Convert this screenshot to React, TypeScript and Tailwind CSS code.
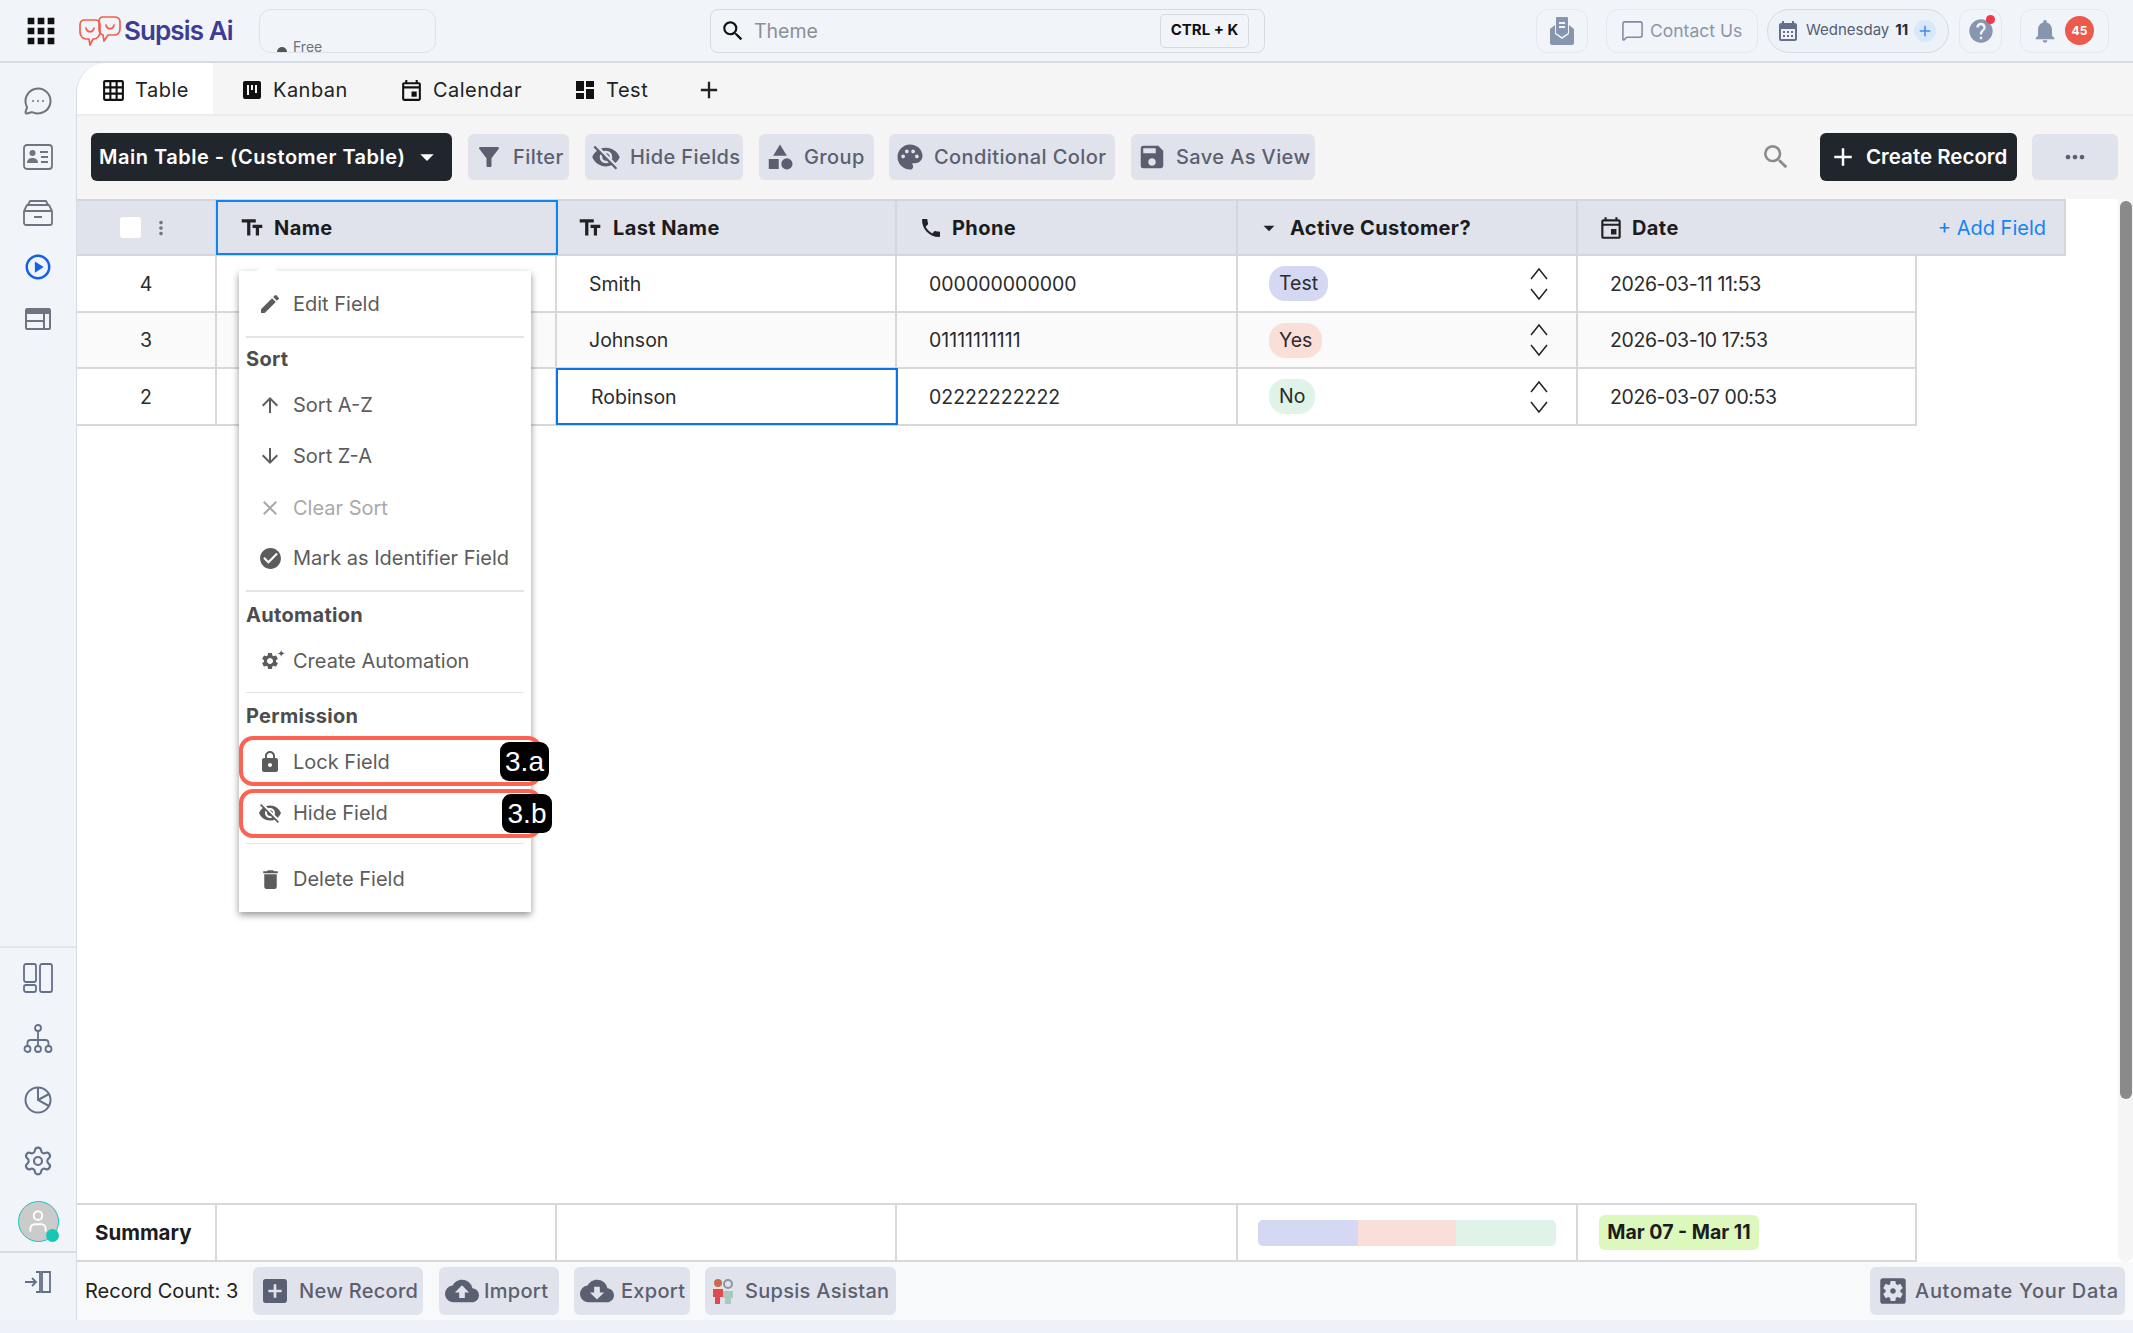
import type { ReactNode } from 'react';
import { MessageCircleMore, MessageSquare, Settings, User } from 'lucide-react';
import {
  MdAddBox, MdApps, MdArrowDownward, MdArrowDropDown, MdArrowUpward, MdCalendarMonth, MdCategory, MdCheckCircle,
  MdClose, MdCloudDownload, MdCloudUpload, MdDashboard, MdDelete, MdEdit, MdFilterAlt, MdGridOn, MdHelp, MdLocalPhone,
  MdLock, MdMoreHoriz, MdMoreVert, MdNotifications, MdOutlineEvent, MdOutlinePlayCircle, MdPalette, MdSave, MdSearch,
  MdSettingsApplications, MdTextFields, MdViewKanban, MdVisibilityOff, MdAdd, MdSettings,
} from 'react-icons/md';

const font = "font-['Inter','Liberation_Sans',sans-serif]";

function Logo() {
  return (
    <svg width="42" height="32" viewBox="0 0 42 32" fill="none" stroke="#f0604d" strokeWidth="1.7" strokeLinejoin="round" strokeLinecap="round">
      <path d="M6 5h10c3 0 5 2 5 5v7c0 4-3 7-6 7h-1l-3 6-1-6H7c-3 0-6-3-6-7v-7c0-3 2-5 5-5z" />
      <path d="M24 2h11c4 0 6 2 6 5v7c0 4-3 6-6 6h-6l-4 6-1-6c-3-1-4-3-4-6V7c0-3 1-5 4-5z" />
      <path d="M7 13c1 5 7 5 8 0M27 10c1 5 7 5 8 0" />
    </svg>
  );
}

function TopBox({ className, children }: { className: string; children: ReactNode }) {
  return <div className={`h-[44px] rounded-[12px] border border-[#e4e8ef] flex items-center ${className}`}>{children}</div>;
}

function Header() {
  return (
    <header className="h-[63px] shrink-0 flex items-center border-b-2 border-[#d6dce4]">
      <MdApps className="ml-[21px] text-[#111] shrink-0" size={40} />
      <div className="ml-[18px] flex items-center gap-[3px] w-[180px]">
        <Logo />
        <span className="text-[26px] font-semibold tracking-[-0.9px] text-[#3d3c96]">Supsis Ai</span>
      </div>
      <div className="w-[177px] h-[44px] rounded-[12px] border border-[#dde2ea] overflow-hidden flex items-start shrink-0">
        <div className="mt-[26px] ml-[17px] flex items-center gap-[6px] text-[14px] leading-[17px] text-[#6b7280]">
          <span className="w-[10px] h-[10px] rounded-full bg-[#555] mt-[11px]" />
          Free
        </div>
      </div>
      <div className="ml-[274px] w-[555px] h-[44px] rounded-[8px] border border-[#d5dae3] flex items-center shrink-0">
        <MdSearch className="ml-[9px] text-[#111]" size={26} />
        <span className="ml-[8px] pt-[2px] text-[19.5px] text-[#8a8f98]">Theme</span>
        <span className="ml-auto mr-[15px] w-[89px] h-[34px] rounded-[5px] border border-[#d5dae3] flex items-center justify-center text-[15px] font-bold text-[#111]">CTRL + K</span>
      </div>
      <TopBox className="ml-[271px] w-[52px] justify-center">
        <svg width="24" height="28" viewBox="0 0 24 28" fill="#8796ae">
          <path d="M0 12l5-4v9l7 5 7-5V8l5 4v14c0 1-1 2-2 2H2c-1 0-2-1-2-2z" />
          <path d="M6 1c0-.5.5-1 1-1h10c.5 0 1 .5 1 1v15l-6 4-6-4zM9 5v2h6V5zm0 4v2h6V9z" fillRule="evenodd" />
        </svg>
      </TopBox>
      <TopBox className="ml-[18px] w-[152px] pl-[14px] gap-[6px] text-[#8a96a8]">
        <MessageSquare size={23} strokeWidth={1.6} className="text-[#7f8ca0]" />
        <span className="text-[17.5px] pt-[2px] whitespace-nowrap">Contact Us</span>
      </TopBox>
      <div className="ml-[9px] w-[182px] h-[44px] rounded-[22px] border border-[#d4dbe6] bg-[#edf2f9] flex items-center pl-[8px] shrink-0">
        <MdCalendarMonth size={24} className="text-[#64708a]" />
        <span className="ml-[6px] text-[15px] text-[#555e70]">Wednesday</span>
        <span className="ml-[6px] text-[15px] font-bold text-[#1f2a44]">11</span>
        <span className="ml-[6px] w-[22px] h-[22px] rounded-full bg-[#d9e7fa] flex items-center justify-center text-[#3b8cf0]">
          <MdAdd size={18} />
        </span>
      </div>
      <TopBox className="ml-[10px] w-[43px] justify-center relative">
        <MdHelp size={28} className="text-[#8796ae]" />
        <span className="absolute top-[5px] right-[6px] w-[9px] h-[9px] rounded-full bg-[#f0394e]" />
      </TopBox>
      <TopBox className="ml-[18px] w-[89px] pl-[10px] gap-[6px]">
        <MdNotifications size={28} className="text-[#8796ae]" />
        <span className="w-[29px] h-[29px] rounded-full bg-[#ec5a4e] text-white text-[12px] font-bold flex items-center justify-center">45</span>
      </TopBox>
    </header>
  );
}

function ContactCard() {
  return (
    <svg width="30" height="26" viewBox="0 0 30 26" fill="none" stroke="#6f7480" strokeWidth="1.8">
      <rect x="1" y="1" width="28" height="24" rx="3" />
      <circle cx="9.5" cy="9" r="3" fill="#6f7480" stroke="none" />
      <path d="M4 19c0-4 3-5 5.500-5s5.500 1 5.500 5z" fill="#6f7480" stroke="none" />
      <path d="M17 8h8M18 13h7M18 18h7" />
    </svg>
  );
}

function Tray() {
  return (
    <svg width="30" height="28" viewBox="0 0 30 28" fill="none" stroke="#6f7480" strokeWidth="1.8" strokeLinejoin="round">
      <path d="M1 12h28v12c0 1-1 2-2 2H3c-1 0-2-1-2-2zM1 12l3-6h22l3 6M5 6l2-4h16l2 4M11 18h8" />
    </svg>
  );
}

function PanelIcon() {
  return (
    <svg width="26" height="22" viewBox="0 0 26 22" fill="#6f7480">
      <path d="M2 0h22c1 0 2 1 2 2v18c0 1-1 2-2 2H2c-1 0-2-1-2-2V2C0 1 1 0 2 0zm0 6v6h16V6zm0 8v6h16v-6zm18-8v14h4V6z" fillRule="evenodd" />
    </svg>
  );
}

function BoardIcon() {
  return (
    <svg width="30" height="30" viewBox="0 0 30 30" fill="none" stroke="#64708a" strokeWidth="1.8">
      <rect x="1" y="1" width="12" height="18" rx="2" />
      <rect x="1" y="22" width="12" height="7" rx="2" />
      <rect x="17" y="1" width="12" height="28" rx="2" />
    </svg>
  );
}

function TreeIcon() {
  return (
    <svg width="30" height="30" viewBox="0 0 30 30" fill="none" stroke="#64708a" strokeWidth="1.8">
      <circle cx="15" cy="4" r="3" />
      <circle cx="4.500" cy="25" r="3" />
      <circle cx="15" cy="25" r="3" />
      <circle cx="25.500" cy="25" r="3" />
      <path d="M15 7v15M4.500 22v-3c0-2 1-3 3-3h15c2 0 3 1 3 3v3" />
    </svg>
  );
}

function PieIcon() {
  return (
    <svg width="28" height="28" viewBox="0 0 28 28" fill="none" stroke="#64708a" strokeWidth="2">
      <circle cx="14" cy="14" r="12.500" />
      <path d="M14 1.500V14l11 6M14 14l11-6" />
    </svg>
  );
}

function CollapseIcon() {
  return (
    <svg width="28" height="24" viewBox="0 0 28 24" fill="none" stroke="#64708a" strokeWidth="1.8">
      <path d="M1 12h11M8 8l4 4-4 4M12 2h4v20h-4M18 2h8v20h-8z" />
    </svg>
  );
}

function Sidebar() {
  return (
    <aside className="w-[76px] shrink-0 flex flex-col items-center">
      <div className="flex flex-col items-center w-full">
        <div className="h-[56px] mt-[10px] flex items-center justify-center"><MessageCircleMore size={30} strokeWidth={1.6} className="text-[#6f7480]" /></div>
        <div className="h-[56px] flex items-center justify-center"><ContactCard /></div>
        <div className="h-[55px] flex items-center justify-center"><Tray /></div>
        <div className="h-[53px] flex items-center justify-center"><MdOutlinePlayCircle size={30} className="text-[#1261e8]" /></div>
        <div className="h-[52px] flex items-center justify-center"><PanelIcon /></div>
      </div>
      <div className="mt-auto w-full border-t-2 border-[#e1e5ec] flex flex-col items-center">
        <div className="h-[60px] flex items-center justify-center"><BoardIcon /></div>
        <div className="h-[61px] flex items-center justify-center"><TreeIcon /></div>
        <div className="h-[61px] flex items-center justify-center"><PieIcon /></div>
        <div className="h-[61px] flex items-center justify-center"><Settings size={32} strokeWidth={1.6} className="text-[#64708a]" /></div>
        <div className="h-[60px] flex items-center justify-center">
          <div className="relative w-[41px] h-[41px] rounded-full bg-[#cbcbcb] border border-[#18c7b8] flex items-center justify-center">
            <User size={26} strokeWidth={1.7} className="text-white" />
            <span className="absolute right-[-1px] bottom-[-1px] w-[13px] h-[13px] rounded-full bg-[#16c6b6]" />
          </div>
        </div>
      </div>
      <div className="w-full border-t-2 border-[#d6dce4] h-[69px] flex items-center justify-center pb-[10px]"><CollapseIcon /></div>
    </aside>
  );
}

function Tab({ icon, label, active }: { icon: ReactNode; label: string; active?: boolean }) {
  return (
    <div className={`h-full flex items-center gap-[9px] px-[24px] pt-[3px] text-[20px] tracking-[0.5px] text-[#222] ${active ? 'bg-white' : ''}`}>
      {icon}
      {label}
    </div>
  );
}

function ToolButton({ icon, label, className }: { icon: ReactNode; label: string; className: string }) {
  return (
    <button className={`h-[46px] rounded-[6px] bg-[#e0e3eb] flex items-center gap-[9px] pl-[6px] text-[20px] tracking-[0.4px] font-medium text-[#5b5f70] whitespace-nowrap shrink-0 ${className}`}>
      {icon}
      {label}
    </button>
  );
}

function HeadCell({ icon, label, className, children }: { icon: ReactNode; label: string; className: string; children?: ReactNode }) {
  return (
    <div className={`h-full flex items-center border-r-2 border-[#d4d6dc] text-[20px] tracking-[0.4px] font-bold text-[#1c1c1c] shrink-0 ${className}`}>
      {icon}
      <span className="whitespace-nowrap">{label}</span>
      {children}
    </div>
  );
}

const rows = [
  { id: 4, last: 'Smith', phone: '000000000000', tag: 'Test', tagClass: 'bg-[#d4d8f2]', date: '2026-03-11 11:53', rowClass: 'bg-white' },
  { id: 3, last: 'Johnson', phone: '01111111111', tag: 'Yes', tagClass: 'bg-[#fadfd9]', date: '2026-03-10 17:53', rowClass: 'bg-[#fafafa]' },
  { id: 2, last: 'Robinson', phone: '02222222222', tag: 'No', tagClass: 'bg-[#dff3e9]', date: '2026-03-07 00:53', rowClass: 'bg-white' },
];

function Table() {
  return (
    <div className="flex-1 min-w-0 flex flex-col">
      <div className="h-[57px] w-[1989px] flex bg-[#e0e3eb] border-y-2 border-[#d4d6dc] shrink-0">
        <div className="w-[140px] h-full flex items-center border-r-2 border-[#d4d6dc] pl-[43px] gap-[9px] shrink-0">
          <span className="w-[21px] h-[21px] rounded-[3px] bg-white" />
          <MdMoreVert size={22} className="text-[#777]" />
        </div>
        <HeadCell
          className="w-[340px] pl-[22px] gap-[9px] outline-2 -outline-offset-1 outline-[#0d84f2]"
          icon={<MdTextFields size={26} className="text-[#222]" />}
          label="Name"
        />
        <HeadCell className="w-[340px] pl-[20px] gap-[10px]" icon={<MdTextFields size={26} className="text-[#222]" />} label="Last Name" />
        <HeadCell className="w-[341px] pl-[22px] gap-[9px]" icon={<MdLocalPhone size={24} className="text-[#222] -scale-x-100 rotate-90" />} label="Phone" />
        <HeadCell className="w-[340px] pl-[18px] gap-[8px]" icon={<MdArrowDropDown size={26} className="text-[#222]" />} label="Active Customer?" />
        <HeadCell className="flex-1 border-r-0 pl-[20px] gap-[8px]" icon={<MdOutlineEvent size={26} className="text-[#222]" />} label="Date">
          <span className="ml-auto mr-[18px] text-[20px] tracking-normal font-normal text-[#1683f5] whitespace-nowrap">+ Add Field</span>
        </HeadCell>
      </div>
      {rows.map((row) => (
        <div key={row.id} className={`h-[56.500px] w-[1840px] flex border-b-2 border-[#d8d8d8] border-r-2 text-[19.5px] text-[#2b2b2b] shrink-0 ${row.rowClass}`}>
          <div className="w-[140px] border-r-2 border-[#d8d8d8] pt-[2px] flex items-center justify-center">{row.id}</div>
          <div className="w-[340px] border-r-2 border-[#d8d8d8]" />
          <div className={`w-[340px] border-r-2 border-[#d8d8d8] pt-[2px] flex items-center pl-[32px] ${row.id === 2 ? 'outline-2 -outline-offset-1 outline-[#0d74e8] pl-[34px]' : ''}`}>{row.last}</div>
          <div className="w-[341px] border-r-2 border-[#d8d8d8] pt-[2px] flex items-center pl-[32px]">{row.phone}</div>
          <div className="w-[340px] border-r-2 border-[#d8d8d8] pt-[1px] flex items-center pl-[31px] pr-[27px] justify-between">
            <span className={`h-[35px] px-[10px] rounded-[16px] flex items-center ${row.tagClass}`}>{row.tag}</span>
            <svg width="20" height="34" viewBox="0 0 20 34" fill="none" stroke="#222" strokeWidth="1.500">
              <path d="M2 12l8-10 8 10M2 22l8 10 8-10" />
            </svg>
          </div>
          <div className="flex-1 flex items-center pl-[32px] pt-[2px] tracking-[-0.4px]">{row.date}</div>
        </div>
      ))}
      <div className="mt-auto h-[59px] w-[1840px] flex border-y-2 border-r-2 border-[#d8d8d8] shrink-0 text-[#1c1c1c]">
        <div className="w-[140px] border-r-2 border-[#d8d8d8] flex items-center pl-[18px] pt-[2px] text-[20.5px] font-bold">Summary</div>
        <div className="w-[340px] border-r-2 border-[#d8d8d8]" />
        <div className="w-[340px] border-r-2 border-[#d8d8d8]" />
        <div className="w-[341px] border-r-2 border-[#d8d8d8]" />
        <div className="w-[340px] border-r-2 border-[#d8d8d8] flex items-center pl-[20px]">
          <div className="w-[298px] h-[26px] rounded-[5px] overflow-hidden flex">
            <span className="w-[100px] bg-[#d4d8f2]" />
            <span className="w-[98px] bg-[#fadfd9]" />
            <span className="flex-1 bg-[#dff3e9]" />
          </div>
        </div>
        <div className="flex-1 flex items-center pl-[21px]">
          <span className="h-[35px] w-[160px] rounded-[6px] bg-[#dcf8bc] flex items-center justify-center text-[19.5px] font-bold whitespace-nowrap">Mar 07 - Mar 11</span>
        </div>
      </div>
    </div>
  );
}

function MenuItem({ icon, label, className, muted }: { icon: ReactNode; label: string; className: string; muted?: boolean }) {
  return (
    <div className={`flex items-center ${muted ? 'text-[#a9a9a9]' : 'text-[#5c5c5c]'} ${className}`}>
      <span className="w-[54px] flex items-center justify-center pl-[8px]">{icon}</span>
      <span className="text-[20px] whitespace-nowrap">{label}</span>
    </div>
  );
}

function MenuHeading({ label, className }: { label: string; className: string }) {
  return <div className={`pl-[7px] flex items-center text-[20px] tracking-[0.3px] font-bold text-[#4d4d4d] ${className}`}>{label}</div>;
}

function AutomationIcon() {
  return (
    <span className="relative inline-flex">
      <MdSettings size={20} />
      <span className="absolute -right-[5px] -top-[3px] text-[10px] leading-none">✦</span>
    </span>
  );
}

function FieldMenu() {
  return (
    <div className="absolute left-[162px] top-[72px] w-[292px] h-[641px] bg-white shadow-[0_3px_7px_rgba(0,0,0,0.42)]">
      <div className="absolute left-[20px] -top-[7px] w-[16px] h-[16px] rotate-45 bg-white" />
      <div className="relative">
        <MenuItem className="h-[65px]" icon={<MdEdit size={24} />} label="Edit Field" />
        <div className="mx-[7px] h-[2px] bg-[#e4e4e4]" />
        <MenuHeading className="h-[42px]" label="Sort" />
        <MenuItem className="h-[50px]" icon={<MdArrowUpward size={24} />} label="Sort A-Z" />
        <MenuItem className="h-[52px]" icon={<MdArrowDownward size={24} />} label="Sort Z-A" />
        <MenuItem className="h-[51px]" muted icon={<MdClose size={24} />} label="Clear Sort" />
        <MenuItem className="h-[50px]" icon={<MdCheckCircle size={25} />} label="Mark as Identifier Field" />
        <div className="h-[7px]" />
        <div className="mx-[7px] h-[2px] bg-[#e4e4e4]" />
        <MenuHeading className="h-[45px]" label="Automation" />
        <MenuItem className="h-[47px]" icon={<AutomationIcon />} label="Create Automation" />
        <div className="h-[8px]" />
        <div className="mx-[7px] h-px bg-[#e4e4e4]" />
        <MenuHeading className="h-[45px]" label="Permission" />
        <MenuItem className="h-[47px]" icon={<MdLock size={24} />} label="Lock Field" />
        <MenuItem className="h-[55px]" icon={<MdVisibilityOff size={24} />} label="Hide Field" />
        <div className="h-[3px]" />
        <div className="mx-[7px] h-px bg-[#e4e4e4]" />
        <MenuItem className="h-[66px] pt-[4px]" icon={<MdDelete size={25} />} label="Delete Field" />
      </div>
      <div className="absolute left-0 top-[465px] w-[303px] h-[50px] rounded-[14px] border-4 border-[#fd6252]" />
      <div className="absolute left-0 top-[518px] w-[303px] h-[49px] rounded-[14px] border-4 border-[#fd6252]" />
      <span className="absolute left-[261px] top-[471px] w-[49px] h-[39px] rounded-[9px] bg-black text-white text-[28px] leading-none flex items-center justify-center font-['Liberation_Sans',sans-serif]">3.a</span>
      <span className="absolute left-[263px] top-[523px] w-[50px] h-[39px] rounded-[9px] bg-black text-white text-[28px] leading-none flex items-center justify-center font-['Liberation_Sans',sans-serif]">3.b</span>
    </div>
  );
}

function HelperFigures() {
  return (
    <svg width="24" height="28" viewBox="0 0 24 28">
      <circle cx="7" cy="6" r="4" fill="#c9694f" />
      <path d="M2 12h10v8H9v7H4v-7H2z" fill="#e0494e" />
      <circle cx="17" cy="7" r="4" fill="none" stroke="#8b95a0" strokeWidth="2" />
      <path d="M12 14h10v7h-2v6h-6v-6h-2z" fill="#a8c8c0" />
    </svg>
  );
}

function Footer() {
  const btn = 'h-[48px] rounded-[6px] bg-[#e0e3eb] flex items-center text-[20px] tracking-[0.3px] font-medium text-[#5b5f70] whitespace-nowrap shrink-0';
  return (
    <footer className="h-[58px] shrink-0 bg-[#f8f9fb] flex items-center text-[#222]">
      <span className="ml-[8px] w-[168px] text-[20px] whitespace-nowrap">Record Count: 3</span>
      <button className={`${btn} w-[170px] pl-[6px] gap-[8px]`}><MdAddBox size={32} className="text-[#5b5f72]" />New Record</button>
      <button className={`${btn} ml-[16px] w-[120px] pl-[6px] gap-[5px]`}><MdCloudUpload size={34} className="text-[#5b5f72]" />Import</button>
      <button className={`${btn} ml-[15px] w-[116px] pl-[6px] gap-[7px]`}><MdCloudDownload size={34} className="text-[#5b5f72]" />Export</button>
      <button className={`${btn} ml-[15px] w-[191px] pl-[6px] gap-[10px]`}><HelperFigures />Supsis Asistan</button>
      <button className={`${btn} ml-auto mr-[8px] w-[255px] pl-[6px] gap-[5px] tracking-[0.7px]`}><MdSettingsApplications size={34} className="text-[#5b5f72]" />Automate Your Data</button>
    </footer>
  );
}

function Main() {
  return (
    <main className="flex-1 min-w-0 flex flex-col bg-[#f5f5f5] rounded-tl-[30px] border-l border-[#d6dce4] overflow-hidden">
      <div className="h-[53px] shrink-0 flex items-center border-b-2 border-[#ececec] gap-[3px]">
        <Tab active icon={<MdGridOn size={25} className="text-[#111]" />} label="Table" />
        <Tab icon={<MdViewKanban size={24} className="text-[#111]" />} label="Kanban" />
        <Tab icon={<MdOutlineEvent size={25} className="text-[#111]" />} label="Calendar" />
        <Tab icon={<MdDashboard size={24} className="text-[#111]" />} label="Test" />
        <MdAdd size={28} className="ml-[20px] mt-[3px] text-[#222]" />
      </div>
      <div className="h-[83px] shrink-0 flex items-center pl-[14px] pr-[15px] pb-[1px]">
        <button className="h-[48px] w-[361px] rounded-[6px] bg-[#21262d] text-white text-[20px] tracking-[0.5px] font-semibold flex items-center pl-[8px] whitespace-nowrap shrink-0">
          Main Table - (Customer Table)
          <MdArrowDropDown size={32} className="ml-[6px]" />
        </button>
        <ToolButton className="ml-[16px] w-[101px]" icon={<MdFilterAlt size={30} />} label="Filter" />
        <ToolButton className="ml-[16px] w-[158px]" icon={<MdVisibilityOff size={30} />} label="Hide Fields" />
        <ToolButton className="ml-[16px] w-[115px]" icon={<MdCategory size={30} />} label="Group" />
        <ToolButton className="ml-[15px] w-[226px]" icon={<MdPalette size={30} />} label="Conditional Color" />
        <ToolButton className="ml-[16px] w-[184px]" icon={<MdSave size={30} />} label="Save As View" />
        <MdSearch size={32} className="ml-auto mr-[28px] text-[#8b8b8b]" />
        <button className="h-[48px] w-[197px] rounded-[6px] bg-[#21262d] text-white text-[20.5px] font-semibold flex items-center pl-[8px] gap-[8px] whitespace-nowrap shrink-0">
          <MdAdd size={30} />
          Create Record
        </button>
        <button className="ml-[15px] h-[46px] w-[86px] rounded-[6px] bg-[#e0e3eb] flex items-center justify-center text-[#5b5f70] shrink-0">
          <MdMoreHoriz size={28} />
        </button>
      </div>
      <div className="relative flex-1 min-h-0 flex bg-white">
        <Table />
        <div className="w-[15px] shrink-0 bg-[#f5f5f5] rounded-b-[8px] pt-[2px]">
          <div className="w-[12px] mx-auto h-[898px] rounded-[6px] bg-[#8a8a8a]" />
        </div>
        <FieldMenu />
      </div>
      <Footer />
    </main>
  );
}

export default function App() {
  return (
    <div className={`w-[2133px] h-[1333px] flex flex-col bg-[#f1f4f8] overflow-hidden ${font}`}>
      <Header />
      <div className="flex-1 min-h-0 flex">
        <Sidebar />
        <Main />
      </div>
      <div className="h-[13px] shrink-0 bg-[#eef0f7]" />
    </div>
  );
}
